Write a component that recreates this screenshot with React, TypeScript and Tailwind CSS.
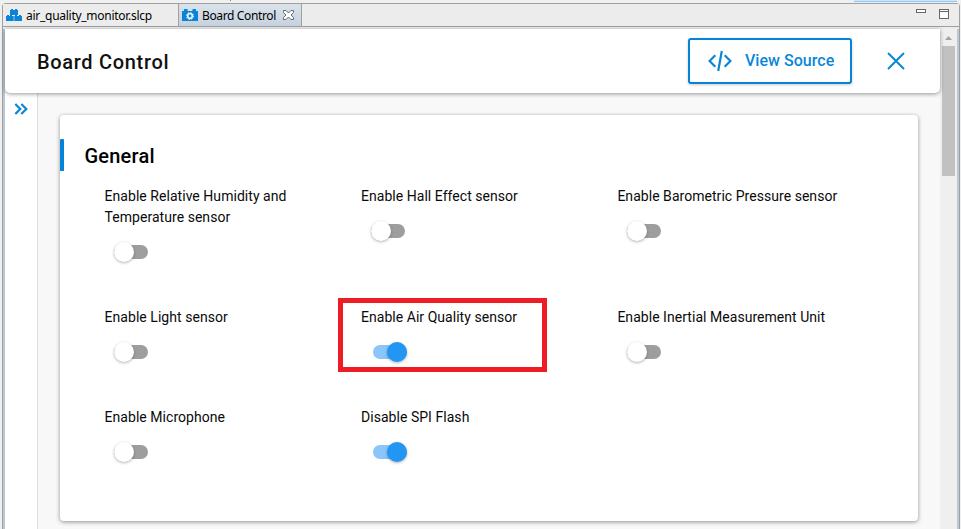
import React from "react";

type Setting = { label: string; on: boolean; highlighted?: boolean };

const settings: Setting[] = [
  { label: "Enable Relative Humidity and Temperature sensor", on: false },
  { label: "Enable Hall Effect sensor", on: false },
  { label: "Enable Barometric Pressure sensor", on: false },
  { label: "Enable Light sensor", on: false },
  { label: "Enable Air Quality sensor", on: true, highlighted: true },
  { label: "Enable Inertial Measurement Unit", on: false },
  { label: "Enable Microphone", on: false },
  { label: "Disable SPI Flash", on: true },
];

function Toggle({ on }: { on: boolean }) {
  return (
    <div
      className={`flex h-[14px] w-[34px] items-center rounded-full ${
        on ? "justify-end bg-[#8ac6fa]" : "justify-start bg-[#9e9e9e]"
      }`}
    >
      <div
        className={`size-5 rounded-full shadow-[0_1px_3px_rgba(0,0,0,0.3)] ${
          on ? "bg-[#2196f3]" : "bg-white"
        }`}
      />
    </div>
  );
}

function SettingCell({ label, on, highlighted }: Setting) {
  return (
    <div className="relative pb-[48px]">
      <div className="w-[200px] text-[14px] leading-[21px] tracking-[0.04px] text-[#0a0a0a]">
        <span className={label.includes("Humidity") ? "" : "whitespace-nowrap"}>{label}</span>
      </div>
      <div className={`mt-[17px] flex ${on ? "ml-[12px]" : "ml-[9.6px]"}`}>
        <Toggle on={on} />
      </div>
      {highlighted && (
        <div className="absolute -top-[9px] -left-[23px] h-[74px] w-[209px] border-[5px] border-[#ee1c25]" />
      )}
    </div>
  );
}

function BricksIcon() {
  return (
    <svg width="16" height="12" viewBox="0 0 16 12" fill="#0a84d6">
      <path d="M4 1h1V0h2v1h2V0h2v1h1v5H4z" />
      <path d="M0 7h1V6h2v1h1V6h2v1h1.700v5H0z" />
      <path d="M8.300 7H9V6h2v1h2V6h2v1h1v5H8.300z" />
    </svg>
  );
}

function CameraGearIcon() {
  return (
    <svg width="16" height="12" viewBox="0 0 16 12">
      <path d="M0 2h2V0h3.500v2h5V0H14v2h2v10H0z" fill="#0a84d6" />
      <circle cx="8" cy="7" r="2.300" fill="none" stroke="#e4f1fb" strokeWidth="1.700" />
      <circle cx="8" cy="7" r="3.300" fill="none" stroke="#e4f1fb" strokeWidth="1.200" strokeDasharray="1.300 1.292" />
    </svg>
  );
}

function TabCloseIcon() {
  return (
    <svg width="11" height="10" viewBox="0 0 11 10">
      <path
        d="M.5.5h2.500l2.500 2.500L8 .5h2.500v2L8 5l2.500 2.500v2H8L5.500 7 3 9.500H.5v-2L3 5 .5 2.500z"
        fill="#fff"
        stroke="#626a72"
      />
    </svg>
  );
}

function TabBar() {
  return (
    <div className="flex h-[23px] shrink-0 border-b border-[#a0a0a0] bg-[#ececec] font-['Noto_Sans','Open_Sans',sans-serif] text-[12px] text-black">
      <div className="flex w-[175px] items-center pl-[3px]">
        <BricksIcon />
        <span className="ml-1 pt-[2px] whitespace-nowrap tracking-[-0.27px]">air_quality_monitor.slcp</span>
      </div>
      <div className="flex w-[124px] items-center border-x border-[#a0a0a0] bg-linear-to-b from-[#dbe3ea] to-[#c5d2de] pl-[3px]">
        <CameraGearIcon />
        <span className="ml-1 w-[75px] pt-[2px] whitespace-nowrap tracking-[-0.36px]">Board Control</span>
        <span className="ml-[6px]">
          <TabCloseIcon />
        </span>
      </div>
      <div className="ml-auto flex gap-[13px] pt-[5px] pr-[10px]">
        <div className="h-1 w-[10px] border border-[#666] bg-white" />
        <div className="h-[10px] w-[10px] border border-[#666] bg-white">
          <div className="h-[2px] border-b border-[#666]" />
        </div>
      </div>
    </div>
  );
}

function Header() {
  return (
    <header className="z-10 flex h-[64px] shrink-0 items-center rounded-b-[5px] bg-white pl-8 shadow-[0_1px_4px_rgba(0,0,0,0.4)]">
      <h1 className="pt-[2px] text-[20px] font-medium tracking-[0.68px] text-[#111]">Board Control</h1>
      <button className="ml-auto flex h-[46px] w-[164px] items-center rounded-[3px] border-2 border-[#0683d6] bg-white pl-[18px] text-[#0a86d8] shadow-[0_1px_3px_rgba(0,0,0,0.2)]">
        <svg width="24" height="22" viewBox="0 0 24 22" fill="none" stroke="currentColor" strokeWidth="2.200">
          <path d="M7.300 5.200 1.600 11l5.700 5.800M16.700 5.200l5.700 5.800-5.700 5.800M13.800 1 10.200 21" />
        </svg>
        <span className="ml-[13px] whitespace-nowrap text-[16px] font-medium tracking-[0.04px]">View Source</span>
      </button>
      <svg className="mr-[35px] ml-[35px]" width="18" height="18" viewBox="0 0 18 18" stroke="#0a86d8" strokeWidth="2">
        <path d="M1 1l16 16M17 1L1 17" />
      </svg>
    </header>
  );
}

function Scrollbar() {
  return (
    <div className="flex w-[17px] shrink-0 flex-col items-center bg-[#efefef] pr-[2px] pl-[2px]">
      <div className="flex h-[17px] items-center justify-center">
        <svg width="7" height="4" viewBox="0 0 7 4" fill="#a3a3a3">
          <path d="M0 4l3.500-4L7 4z" />
        </svg>
      </div>
      <div className="h-[130px] w-[13px] bg-[#c1c1c1]" />
    </div>
  );
}

export default function App() {
  return (
    <div className="flex h-[529px] w-[961px] flex-col overflow-hidden bg-[#f0f0f0] font-[Roboto,sans-serif]">
      <div className="flex h-[3px] shrink-0 justify-end pr-[4px]">
        <div className="mr-auto ml-[230px] h-px w-px bg-[#888]" />
        <div className="h-[2px] w-[103px] border-b border-[#90c8f6] bg-[#cce8ff]" />
      </div>
      <div className="mr-[1px] ml-[2px] flex min-h-0 flex-1 flex-col rounded-t-[4px] border-x border-t border-[#a0a0a0]">
        <TabBar />
        <div className="h-[2px] shrink-0 bg-[#ececec]" />
        <div className="flex min-h-0 flex-1 border-x-2 border-[#bbc8d4]">
          <div className="flex min-w-0 flex-1 flex-col bg-[#f8f8f8]">
            <Header />
            <div className="flex min-h-0 flex-1">
              <aside className="w-[33px] shrink-0 border-r border-[#dedede] bg-white pt-[10px] pl-[9px]">
                <svg width="15" height="12" viewBox="0 0 15 12" fill="none" stroke="#0a86d8" strokeWidth="2.200">
                  <path d="M1.300 1l5 5-5 5M7.300 1l5 5-5 5" />
                </svg>
              </aside>
              <main className="pt-[22px] pl-[22px]">
                <section className="h-[406px] w-[858px] rounded-[4px] bg-white pt-6 shadow-[0_1px_4px_rgba(0,0,0,0.42)]">
                  <div className="flex h-8 items-center">
                    <div className="h-8 w-1 rounded-t-[1px] bg-[#0683d6]" />
                    <h2 className="pt-[2px] pl-[20.500px] text-[20px] font-medium tracking-[0.2px] text-black">General</h2>
                  </div>
                  <div className="mt-[15px] ml-[44.600px] grid grid-cols-[256.400px_256.400px_256.400px]">
                    {settings.map((setting) => (
                      <SettingCell key={setting.label} {...setting} />
                    ))}
                  </div>
                </section>
              </main>
            </div>
          </div>
          <Scrollbar />
        </div>
      </div>
    </div>
  );
}
